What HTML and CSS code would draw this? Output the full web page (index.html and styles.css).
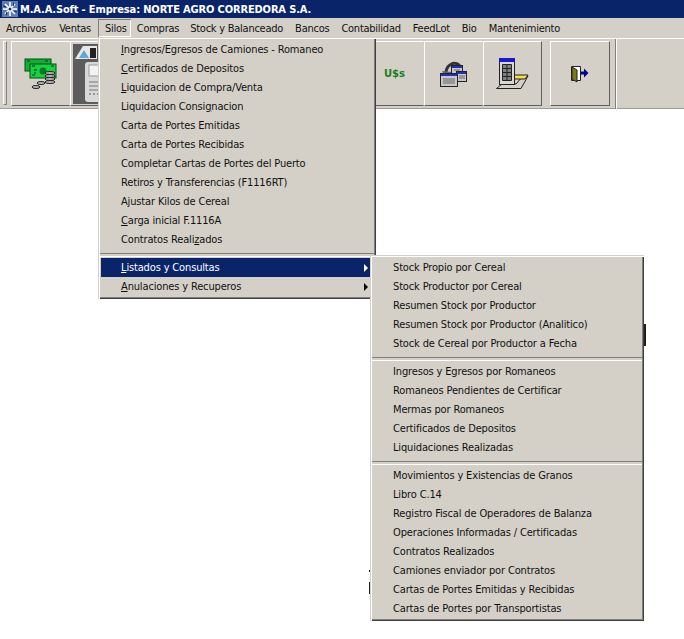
FILE: index.html
```html
<!DOCTYPE html>
<html lang="es">
<head>
<meta charset="utf-8">
<title>M.A.A.Soft</title>
<link rel="stylesheet" href="styles.css">
</head>
<body>
<header class="titlebar">
  <svg class="appicon" width="16" height="16" viewBox="0 0 16 16">
    <rect width="16" height="16" fill="#5c7fb0"/>
    <path d="M8 1v14M1 8h14M3 3l10 10M13 3L3 13" stroke="#fff" stroke-width="1.6"/>
    <path d="M1 5l3 1M12 2l-1 3M15 11l-3-1M4 14l1-3" stroke="#16306f" stroke-width="1.2"/>
    <circle cx="8" cy="8" r="1.5" fill="#16306f"/>
  </svg>
  <span class="titletext">M.A.A.Soft - Empresa: NORTE AGRO CORREDORA S.A.</span>
</header>
<nav class="menubar">
  <span class="mb mb-wide">Archivos</span>
  <span class="mb mb-wide">Ventas</span>
  <span class="mb mb-open">Silos</span>
  <span class="mb mb-tight">Compras</span>
  <span class="mb">Stock y Balanceado</span>
  <span class="mb">Bancos</span>
  <span class="mb">Contabilidad</span>
  <span class="mb">FeedLot</span>
  <span class="mb">Bio</span>
  <span class="mb">Mantenimiento</span>
</nav>
<section class="toolbar">
  <div class="grip"></div>
  <div class="tools">
    <button class="tool">
      <svg width="34" height="32" viewBox="0 0 34 32">
        <rect x="1" y="1" width="26" height="12" fill="#10b030" stroke="#064a14"/>
        <rect x="6" y="6" width="26" height="14" fill="#18d040" stroke="#064a14"/>
        <circle cx="19" cy="13" r="3.5" fill="#0a7a20"/>
        <path d="M8 8h3M8 17h3M27 8h3M27 17h3M3 3h3M21 3h3M10 12h3M10 15h2" stroke="#063" stroke-width="1.5"/>
        <g fill="#b8b8b8" stroke="#222">
          <ellipse cx="26" cy="15" rx="5" ry="1.5"/><ellipse cx="26" cy="18" rx="5" ry="1.5"/><ellipse cx="26" cy="21" rx="5" ry="1.5"/><ellipse cx="26" cy="24" rx="5" ry="1.5"/>
          <ellipse cx="17" cy="25" rx="4" ry="1.5"/><ellipse cx="12" cy="29" rx="4" ry="1.5"/>
        </g>
      </svg>
    </button>
    <button class="tool tool-photo">
      <svg width="54" height="60" viewBox="0 0 54 60">
        <rect width="54" height="60" fill="#5c5c5c"/>
        <path d="M2 15L10 2h14v13z" fill="#e8e8e8"/>
        <path d="M6 14l5-8 5 8z" fill="#5fa8d8"/>
        <rect x="17" y="4" width="6" height="10" fill="#222"/>
        <rect x="12" y="18" width="42" height="40" rx="3" fill="#d8d8d8"/>
        <rect x="16" y="21" width="38" height="11" fill="#f2f2f2" stroke="#999"/>
        <path d="M16 38h10M16 42h10M16 46h10" stroke="#777"/>
        <path d="M16 50h38" stroke="#555" stroke-dasharray="2 2"/>
      </svg>
    </button>
    <button class="tool"></button>
    <button class="tool"></button>
    <button class="tool"></button>
    <button class="tool"></button>
    <button class="tool"><span class="usd">U$s</span></button>
    <button class="tool">
      <svg width="27" height="27" viewBox="0 0 27 27">
        <path d="M6 13C6 5 14 1 19 5l2 3" fill="none" stroke="#333" stroke-width="3"/>
        <path d="M2 11l5 9 5-8z" fill="#666"/>
        <g stroke="#222" fill="#c8c8c8">
          <rect x="11.500" y="5.500" width="11" height="11"/>
          <rect x="16.500" y="11.500" width="10" height="10"/>
          <rect x="0.500" y="13.500" width="17" height="13"/>
        </g>
        <path d="M12 6h10v2H12zM17 12h9v2h-9zM1 14h16v2H1z" fill="#2030c0"/>
        <path d="M3 19h12M3 21h12M3 23h12M19 16h6M19 18h6M14 10h6" stroke="#666"/>
      </svg>
    </button>
    <button class="tool tool-end">
      <svg width="33" height="31" viewBox="0 0 33 31">
        <path d="M0.500 30.500L6 26h14l7-8h5l-7 12.500z" fill="#d4d0c8" stroke="#222"/>
        <path d="M18 17h14l-3 4H18z" fill="#f4e040" stroke="#222"/>
        <rect x="3.500" y="0.500" width="15" height="26" fill="#d8d8d8" stroke="#222"/>
        <rect x="3" y="0" width="16" height="4" fill="#1818d0"/>
        <path d="M6.500 6.500h9v4h-9zM6.500 10.500h9v4h-9zM6.500 14.500h9v4h-9zM6.500 18.500h9v4h-9z" fill="#808080" stroke="#222"/>
        <path d="M11 6v17" stroke="#222"/>
      </svg>
    </button>
    <button class="tool tool-end tool-last">
      <svg width="18" height="18" viewBox="0 0 18 18">
        <path d="M0.500 1.500h9v14h-9z" fill="#fff" stroke="#222"/>
        <path d="M1 2l5 3v12l-5-3z" fill="#7a7a18" stroke="#222"/>
        <path d="M10 6.500h3V3.500L17.500 8 13 12.500V9.500h-3z" fill="#000090"/>
      </svg>
    </button>
  </div>
  <div class="band"></div>
</section>
<main class="workspace">
  <span class="speck speck-a"></span>
  <span class="speck speck-b"></span>
  <span class="speck speck-c"></span>
</main>

<div class="menu menu-silos">
  <div class="mi"><span><u>I</u>ngresos/Egresos de Camiones - Romaneo</span></div>
  <div class="mi"><span><u>C</u>ertificados de Depositos</span></div>
  <div class="mi"><span><u>L</u>iquidacion de Compra/Venta</span></div>
  <div class="mi"><span>Liquidacion Consi<u>g</u>nacion</span></div>
  <div class="mi"><span>Carta de Portes Emitidas</span></div>
  <div class="mi"><span>Carta de Portes Recibidas</span></div>
  <div class="mi"><span>Completar Cartas de Portes del Puerto</span></div>
  <div class="mi"><span>Retiros y Transferencias (F1116RT)</span></div>
  <div class="mi"><span>Ajustar Kilos de Cereal</span></div>
  <div class="mi"><span><u>C</u>arga inicial F.1116A</span></div>
  <div class="mi"><span>Contratos Reali<u>z</u>ados</span></div>
  <div class="sep"></div>
  <div class="mi mi-sel"><span><u>L</u>istados y Consultas</span><i class="arrow"></i></div>
  <div class="mi"><span><u>A</u>nulaciones y Recuperos</span><i class="arrow arrow-dark"></i></div>
</div>

<div class="menu menu-listados">
  <div class="mi"><span>Stock Propio por Cereal</span></div>
  <div class="mi"><span>Stock Productor por Cereal</span></div>
  <div class="mi"><span>Resumen Stock por Productor</span></div>
  <div class="mi"><span>Resumen Stock por Productor (Analitico)</span></div>
  <div class="mi"><span>Stock de Cereal por Productor a Fecha</span></div>
  <div class="sep"></div>
  <div class="mi"><span>Ingresos y Egresos por Romaneos</span></div>
  <div class="mi"><span>Romaneos Pendientes de Certificar</span></div>
  <div class="mi"><span>Mermas por Romaneos</span></div>
  <div class="mi"><span>Certificados de Depositos</span></div>
  <div class="mi"><span>Liquidaciones Realizadas</span></div>
  <div class="sep"></div>
  <div class="mi"><span>Movimientos y Existencias de Granos</span></div>
  <div class="mi"><span>Libro C.14</span></div>
  <div class="mi"><span>Registro Fiscal de Operadores de Balanza</span></div>
  <div class="mi"><span>Operaciones Informadas / Certificadas</span></div>
  <div class="mi"><span>Contratos Realizados</span></div>
  <div class="mi"><span>Camiones enviador por Contratos</span></div>
  <div class="mi"><span>Cartas de Portes Emitidas y Recibidas</span></div>
  <div class="mi"><span>Cartas de Portes por Transportistas</span></div>
</div>
</body>
</html>
```
FILE: styles.css
```css
* { box-sizing: border-box; }
html, body { margin: 0; height: 100%; overflow: hidden; background: #fff; }
body {
  position: relative;
  display: flex;
  flex-direction: column;
  width: 684px;
  height: 639px;
  font: 11px/1 "DejaVu Sans Condensed", "DejaVu Sans", sans-serif;
  letter-spacing: -0.15px;
  color: #000;
}
.titlebar {
  display: flex;
  align-items: center;
  gap: 2px;
  height: 18px;
  padding-left: 2px;
  background: #0a246a;
  color: #fff;
  font-weight: bold;
}
.appicon { flex: none; }
.menubar {
  display: flex;
  align-items: center;
  height: 20px;
  background: #d4d0c8;
  letter-spacing: -0.25px;
}
.mb { padding: 0 6px; color: #111; }
.mb-wide { padding-right: 7px; }
.mb-tight { padding-right: 5px; }
.mb-open {
  align-self: stretch;
  display: flex;
  align-items: center;
  margin: 1px 0;
  padding: 0 4px 0 7px;
  box-shadow: inset 1px 1px 0 #808080, inset -1px -1px 0 #fff;
}
.toolbar {
  position: relative;
  display: flex;
  height: 71px;
  background: #d4d0c8;
  border-top: 1px solid #fff;
  box-shadow: inset 0 -1px 0 #a09c94;
}
.grip {
  width: 4px;
  margin: 2px 0 4px 3px;
  border: 1px solid;
  border-color: #fff #808080 #808080 #fff;
}
.tools {
  display: flex;
  width: 609px;
  padding: 2px 0 0 4px;
  border-right: 1px solid #808080;
}
.tool {
  display: flex;
  align-items: center;
  justify-content: center;
  flex: none;
  width: 59px;
  height: 65px;
  padding: 0;
  border: 1px solid;
  border-color: #fff #d4d0c8 #606060 #fff;
  background: #d4d0c8;
}
.tool-end { border-right-color: #606060; }
.tool-last { width: 60px; margin-left: 8px; }
.usd { font: bold 10px "DejaVu Sans", sans-serif; color: #1a7d1a; }
.band { flex: 1; border-left: 1px solid #fff; }
.workspace { position: relative; flex: 1; background: #fff; }
.speck { position: absolute; background: #1e1e14; }
.speck-a { left: 644px; top: 215px; width: 2px; height: 22px; }
.speck-b { left: 369px; top: 461px; width: 1px; height: 2px; }
.speck-c { left: 369px; top: 473px; width: 1px; height: 12px; }
.menu {
  position: absolute;
  padding: 3px;
  background: #d4d0c8;
  box-shadow: inset 1px 1px 0 #d4d0c8, inset 2px 2px 0 #fff, inset -1px -1px 0 #404040, inset -2px -2px 0 #808080;
}
.menu-silos { left: 98px; top: 37px; width: 278px; }
.menu-listados { left: 370px; top: 255px; width: 274px; }
.mi {
  display: flex;
  align-items: center;
  justify-content: space-between;
  height: 19px;
  padding: 0 5px 0 20px;
  color: #111;
  white-space: pre;
}
.mi-sel { background: #0a246a; color: #fff; }
.sep { height: 9px; padding-top: 4px; }
.sep::before {
  content: "";
  display: block;
  height: 2px;
  margin: 0 -1px;
  border-top: 1px solid #808080;
  border-bottom: 1px solid #fff;
}
.arrow {
  width: 0;
  height: 0;
  border-style: solid;
  border-width: 4px 0 4px 4px;
  border-color: transparent transparent transparent #fff;
}
.arrow-dark { border-left-color: #000; }
```
